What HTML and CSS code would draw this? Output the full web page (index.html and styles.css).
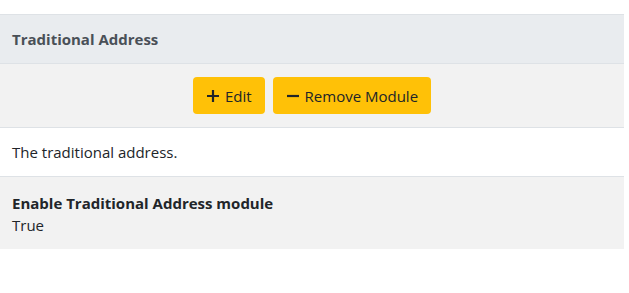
FILE: index.html
```html
<!DOCTYPE html>
<html lang="en">
<head>
    <meta charset="UTF-8">
    <meta name="viewport" content="width=device-width, initial-scale=1.0">
    <title>Traditional Address</title>
    <link rel="stylesheet" href="styles.css">
</head>
<body>

<div class="module-card">
    <div class="module-heading">Traditional Address</div>

    <div class="module-actions">
        <button type="button" class="btn-warning">
            <svg class="icon" viewBox="0 0 12 12" width="12" height="12">
                <path d="M4.9 0h2.2v4.9H12v2.2H7.1V12H4.9V7.1H0V4.9h4.9z"/>
            </svg>
            Edit
        </button>
        <button type="button" class="btn-warning">
            <svg class="icon" viewBox="0 0 12 12" width="12" height="12">
                <path d="M0 4.9h12v2.2H0z"/>
            </svg>
            Remove Module
        </button>
    </div>

    <div class="module-description">The traditional address.</div>

    <div class="module-setting">
        <div class="setting-name">Enable Traditional Address module</div>
        <div class="setting-value">True</div>
    </div>
</div>

</body>
</html>
```

FILE: styles.css
```css
body {
    font-family: "Open Sans", "Noto Sans", sans-serif;
    font-size: 15px;
    color: #212529;
    margin: 0;
    padding: 0;
    background-color: #fff;
}
.module-card {
    width: 624px;
    margin-top: 14px;
}
.module-heading {
    height: 48px;
    line-height: 48px;
    padding: 0 12px;
    background-color: #e9ecef;
    border-top: 1px solid #dee2e6;
    border-bottom: 1px solid #dee2e6;
    color: #495057;
    font-weight: bold;
}
.module-actions {
    display: flex;
    justify-content: center;
    gap: 8px;
    padding: 13px 0;
    background-color: #f2f2f2;
    border-bottom: 1px solid #dee2e6;
}
.btn-warning {
    display: flex;
    align-items: center;
    gap: 6px;
    height: 37px;
    padding: 0 13px 0 14px;
    font-family: inherit;
    font-size: 15px;
    color: #212529;
    background-color: #ffc107;
    border: none;
    border-radius: 4px;
    cursor: pointer;
}
.btn-warning:hover {
    background-color: #e0a800;
}
.icon {
    fill: #212529;
}
.module-description {
    height: 48px;
    line-height: 48px;
    padding: 0 12px;
    border-bottom: 1px solid #dee2e6;
}
.module-setting {
    height: 72px;
    padding: 0 12px;
    box-sizing: border-box;
    padding-top: 15px;
    background-color: #f2f2f2;
}
.setting-name {
    font-weight: bold;
    line-height: 22px;
}
.setting-value {
    line-height: 22px;
}
```
